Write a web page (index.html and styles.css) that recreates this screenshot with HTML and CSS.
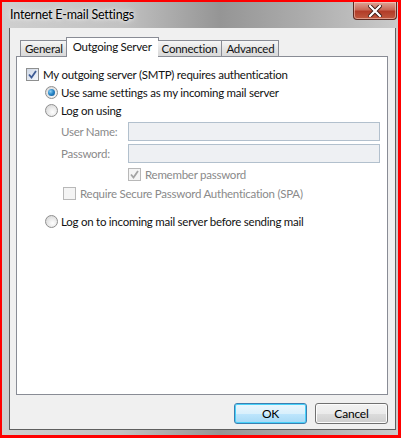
FILE: index.html
```html
<!DOCTYPE html>
<html lang="en">
<head>
    <meta charset="UTF-8">
    <title>Internet E-mail Settings</title>
    <link rel="stylesheet" href="styles.css">
</head>
<body>
    <div class="window">
        <div class="titlebar">
            <span class="title">Internet E-mail Settings</span>
            <div class="close-btn">
                <svg width="14" height="12" viewBox="0 0 14 12">
                    <path d="M2 1 L12 11 M12 1 L2 11" stroke="#3a1a14" stroke-width="4" stroke-linecap="square"/>
                    <path d="M2 1 L12 11 M12 1 L2 11" stroke="#fff" stroke-width="2.2" stroke-linecap="square"/>
                </svg>
            </div>
        </div>

        <div class="client">
            <div class="tabs">
                <div class="tab first">General</div>
                <div class="tab active">Outgoing Server</div>
                <div class="tab">Connection</div>
                <div class="tab">Advanced</div>
            </div>

            <div class="panel">
                <div class="row">
                    <span class="check checked">
                        <svg width="9" height="9" viewBox="0 0 9 9"><path d="M1 4.5 L3.5 7.5 L8 1" fill="none" stroke="#3d5b95" stroke-width="1.8"/></svg>
                    </span>
                    My outgoing server (SMTP) requires authentication
                </div>

                <div class="row indent">
                    <span class="radio selected"></span>
                    Use same settings as my incoming mail server
                </div>
                <div class="row indent">
                    <span class="radio"></span>
                    Log on using
                </div>

                <div class="field">
                    <span class="field-label">User Name:</span>
                    <span class="textbox"></span>
                </div>
                <div class="field">
                    <span class="field-label">Password:</span>
                    <span class="textbox"></span>
                </div>

                <div class="row disabled remember">
                    <span class="check muted">
                        <svg width="9" height="9" viewBox="0 0 9 9"><path d="M1 4.5 L3.5 7.5 L8 1" fill="none" stroke="#a3a3a3" stroke-width="1.8"/></svg>
                    </span>
                    Remember password
                </div>
                <div class="row disabled spa">
                    <span class="check muted"></span>
                    Require Secure Password Authentication (SPA)
                </div>

                <div class="row indent last">
                    <span class="radio"></span>
                    Log on to incoming mail server before sending mail
                </div>
            </div>

            <div class="buttons">
                <button class="btn default">OK</button>
                <button class="btn">Cancel</button>
            </div>
        </div>
    </div>
</body>
</html>
```

FILE: styles.css
```css
:root {
    --face: #f0f0f0;
    --edge: #898c95;
    --gray-text: #8a8a8a;
}

body {
    margin: 0;
    padding: 0;
    font-family: Lato, "Noto Sans", sans-serif;
    font-size: 11.5px;
    letter-spacing: -0.25px;
    color: #111;
    background: #fff;
}

.window {
    width: 401px;
    height: 438px;
    box-sizing: border-box;
    border-style: solid;
    border-color: #ff0000;
    border-width: 2px 3px 3px 2px;
    background: linear-gradient(90deg, #cfcfcf 0%, #c2c2c2 30%, #959595 55%, #ababab 75%, #cbcbcb 100%);
    display: flex;
    flex-direction: column;
}

.titlebar {
    height: 26px;
    display: flex;
    justify-content: space-between;
    align-items: flex-start;
    flex-shrink: 0;
}

.title {
    margin: 5px 0 0 8px;
    font-size: 12.5px;
    letter-spacing: -0.2px;
    color: #000;
    text-shadow: 0 0 6px #fff, 0 0 3px #eee;
}

.close-btn {
    width: 42px;
    height: 17px;
    margin-right: 1px;
    border: 1px solid #5c2a22;
    border-top: none;
    border-radius: 0 0 4px 4px;
    background: linear-gradient(#dda597 0%, #c96a58 45%, #b23c28 55%, #c0593f 100%);
    box-shadow: inset 0 0 0 1px rgba(255, 220, 210, 0.5);
    display: flex;
    justify-content: center;
    align-items: center;
}

.client {
    flex: 1;
    margin: 0 2px 5px 7px;
    background: var(--face);
    border: 1px solid #5f5f5f;
    border-top: none;
    box-sizing: border-box;
    padding: 9px 7px 0 6px;
    display: flex;
    flex-direction: column;
}

.tabs {
    display: flex;
    align-items: flex-end;
    height: 19px;
    padding-left: 4px;
    position: relative;
    z-index: 1;
}

.tab {
    height: 16px;
    line-height: 15px;
    padding: 0 4px;
    border: 1px solid var(--edge);
    border-bottom: none;
    border-left: none;
    background: linear-gradient(#f6f6f6, #e5e5e5 50%, #d9d9d9);
    box-sizing: border-box;
}

.tab.first {
    border-left: 1px solid var(--edge);
}

.tab.active {
    height: 20px;
    line-height: 17px;
    padding: 0 6px;
    margin: 0 -1px -1px -2px;
    border-left: 1px solid var(--edge);
    background: #fff;
}

.panel {
    height: 339px;
    background: #fff;
    border: 1px solid var(--edge);
    box-sizing: border-box;
    padding: 8px 7px 0 9px;
    display: flex;
    flex-direction: column;
}

.row {
    display: flex;
    align-items: center;
    height: 18px;
}

.indent {
    padding-left: 19px;
}

.check {
    width: 13px;
    height: 13px;
    box-sizing: border-box;
    border: 1px solid #8e8f8f;
    background: linear-gradient(135deg, #dcdcdc, #fbfbfb);
    margin-right: 4px;
    display: flex;
    justify-content: center;
    align-items: center;
    flex-shrink: 0;
}

.check.checked {
    background: linear-gradient(135deg, #cfd8e6, #f4f7fb);
}

.check.muted {
    border-color: #b8b8b8;
    background: #f4f4f4;
}

.radio {
    width: 13px;
    height: 13px;
    box-sizing: border-box;
    border: 1px solid #8f8f8f;
    border-radius: 50%;
    background: radial-gradient(circle at 60% 65%, #ffffff 0%, #d9d9d9 80%);
    margin-right: 3px;
    flex-shrink: 0;
    display: flex;
    justify-content: center;
    align-items: center;
}

.radio.selected::after {
    content: "";
    width: 7px;
    height: 7px;
    border-radius: 50%;
    background: radial-gradient(circle at 35% 35%, #8fd0f5 0%, #2a88c8 45%, #0b4f8f 100%);
}

.field {
    display: flex;
    align-items: center;
    height: 19px;
    margin-top: 3px;
    padding-left: 35px;
}

.field:first-of-type {
    margin-top: 4px;
}

.field-label {
    width: 67px;
    color: var(--gray-text);
}

.textbox {
    flex: 1;
    height: 19px;
    box-sizing: border-box;
    border: 1px solid #b2c0cd;
    background: #eef0f3;
}

.disabled {
    color: var(--gray-text);
}

.remember {
    padding-left: 102px;
    margin-top: 2px;
    height: 19px;
}

.spa {
    padding-left: 37px;
    height: 19px;
}

.last {
    margin-top: 9px;
}

.buttons {
    display: flex;
    justify-content: flex-end;
    gap: 8px;
    padding-top: 8px;
}

.btn {
    width: 73px;
    height: 21px;
    font-family: inherit;
    font-size: 12px;
    letter-spacing: -0.2px;
    color: #000;
    border: 1px solid #707070;
    border-radius: 3px;
    background: linear-gradient(#f2f2f2 0%, #ebebeb 50%, #dddddd 51%, #cfcfcf 100%);
    box-shadow: inset 0 0 0 1px #fcfcfc;
    padding: 0;
}

.btn.default {
    border-color: #3c7fb1;
    box-shadow: inset 0 0 0 1px #48d1f9;
    background: linear-gradient(#eaf6fd 0%, #d9f0fc 50%, #bee6fd 51%, #a7d9f5 100%);
}
```
